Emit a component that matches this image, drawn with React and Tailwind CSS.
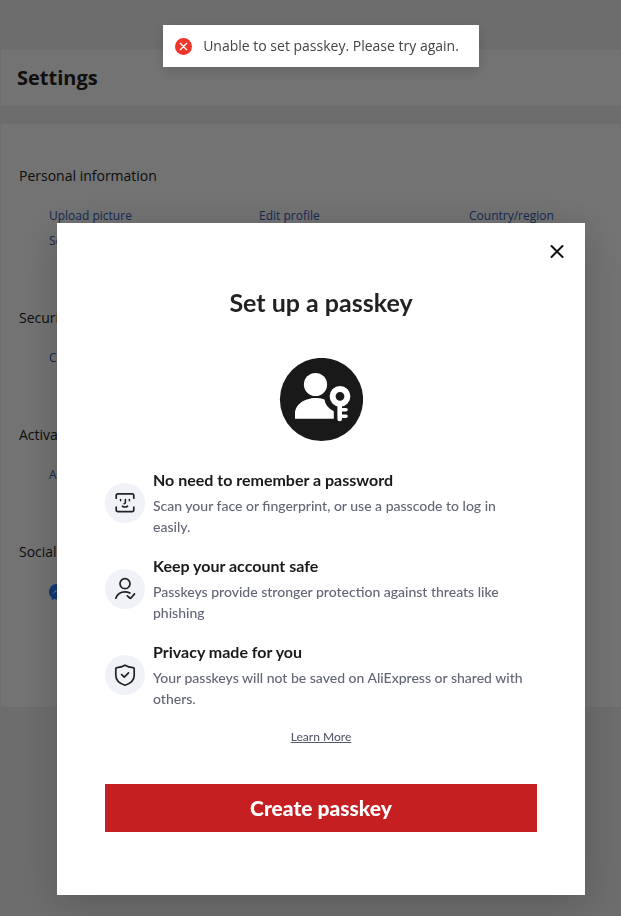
const sections = [
  {
    title: 'Personal information',
    links: ['Upload picture', 'Edit profile', 'Country/region', 'Seller information'],
    height: 'h-[142px]',
  },
  { title: 'Security information', links: ['Change password'], height: 'h-[117px]' },
  { title: 'Activation', links: ['Activate account'], height: 'h-[117px]' },
];

function FaceIcon() {
  return (
    <svg viewBox="0 0 40 40" className="size-10" fill="none" stroke="#222" strokeWidth="1.7" strokeLinecap="round" strokeLinejoin="round" aria-hidden="true">
      <path d="M11.200 15.200V12.600q0-1.800 1.800-1.800h14q1.800 0 1.800 1.800v2.600M11.200 24.200v2.600q0 1.800 1.800 1.800h14q1.800 0 1.800-1.800v-2.600" />
      <path d="M15.600 16.600v1M24.400 16.600v1M20.400 16.600v2.600q0 1.400-1.300 1.500M17.400 23.200q2.600 1.600 5.200 0" strokeWidth="1.600" />
    </svg>
  );
}

function PersonIcon() {
  return (
    <svg viewBox="0 0 40 40" className="size-10" fill="none" stroke="#222" strokeWidth="1.7" strokeLinecap="round" strokeLinejoin="round" aria-hidden="true">
      <circle cx="20" cy="14.700" r="5" />
      <path d="M10.800 29.200q2.300-6.300 9.200-6.300 2.800 0 4.900 1.100M22.300 26.800l2.500 2.200q.6.500 1.200 0l3.500-4.100" />
    </svg>
  );
}

function ShieldIcon() {
  return (
    <svg viewBox="0 0 40 40" className="size-10" fill="none" stroke="#222" strokeWidth="1.7" strokeLinecap="round" strokeLinejoin="round" aria-hidden="true">
      <path d="M20 10.200c2.600 1.500 5.200 2.200 8 2.500q1.200.1 1.200 1.300v6.300c0 5-3.400 8.200-9.200 10-5.800-1.800-9.200-5-9.200-10V14q0-1.200 1.200-1.300c2.800-.3 5.400-1 8-2.500z" />
      <path d="M16.600 19.700l2.700 2.500 4.200-4.300" />
    </svg>
  );
}

function PasskeyIcon() {
  return (
    <svg viewBox="-0.5 0.5 84 84" className="size-[84px]" aria-hidden="true">
      <circle cx="42" cy="42" r="41.600" fill="#191919" />
      <circle cx="36" cy="27" r="11.600" fill="#fff" />
      <path d="M15.500 61.200V56C15.500 47 25.500 40.600 36 40.600q5 0 9 1.300.8 7.300 9.300 11.800V61.200z" fill="#fff" />
      <circle cx="60.500" cy="38.800" r="7.400" fill="none" stroke="#fff" strokeWidth="6" />
      <path d="M60.200 47v14.500" stroke="#fff" strokeWidth="4.600" strokeLinecap="round" />
      <path d="M61 52.200h5.500M61 58.800h5.500" stroke="#fff" strokeWidth="3.600" strokeLinecap="round" />
    </svg>
  );
}

const benefits = [
  { Icon: FaceIcon, title: 'No need to remember a password', text: 'Scan your face or fingerprint, or use a passcode to log in easily.' },
  { Icon: PersonIcon, title: 'Keep your account safe', text: 'Passkeys provide stronger protection against threats like phishing' },
  { Icon: ShieldIcon, title: 'Privacy made for you', text: 'Your passkeys will not be saved on AliExpress or shared with others.' },
];

function SettingsPage() {
  return (
    <main className="min-h-screen bg-[#f2f2f2] pt-[50px] pl-px font-['Open_Sans',sans-serif]">
      <header className="bg-white px-4 py-3">
        <h1 className="text-xl leading-8 font-bold text-[#222]">Settings</h1>
      </header>
      <div className="mt-[18px] h-[583px] overflow-hidden bg-white pt-10 pl-[18px]">
        {sections.map(({ title, links, height }) => (
          <section key={title} className={height}>
            <h2 className="text-sm leading-6 text-[#222]">{title}</h2>
            <ul className="mt-[15px] grid grid-cols-[repeat(3,210px)] pl-[30px] text-xs leading-[25px]">
              {links.map((link) => (
                <li key={link}>
                  <a href="#settings" className="text-[#2e5cb8]">{link}</a>
                </li>
              ))}
            </ul>
          </section>
        ))}
        <section>
          <h2 className="text-sm leading-6 text-[#222]">Social accounts</h2>
          <a href="#social" aria-label="Messenger" className="mt-5 ml-[30px] block w-4">
            <svg viewBox="0 0 16 16" className="size-4" aria-hidden="true">
              <path d="M8 0a8 7.700 0 0 0-5.300 13.500V16l2.600-1.100A8 7.700 0 1 0 8 0z" fill="#2b80ff" />
              <path d="M3 10l3.400-3.800 2 1.700L12.500 5.500 9.300 9.200 7.200 7.500z" fill="#fff" />
            </svg>
          </a>
        </section>
      </div>
    </main>
  );
}

function PasskeyDialog() {
  return (
    <div className="fixed inset-0 flex items-start bg-black/55 pt-[223px] pr-9 pl-[57px]">
      <div
        role="dialog"
        aria-modal="true"
        aria-labelledby="passkey-title"
        className="mx-auto flex w-full max-w-[528px] flex-col bg-white px-12 pt-4 pb-[63px] font-[Lato,sans-serif] shadow-[0_8px_40px_rgba(0,0,0,0.2)]"
      >
        <button type="button" aria-label="Close" className="-mr-8 flex size-6 items-center justify-center self-end">
          <svg viewBox="0 0 24 24" className="size-6" fill="none" stroke="#111" strokeWidth="2" strokeLinecap="round" aria-hidden="true">
            <path d="M6.500 7l11 11M17.500 7l-11 11" />
          </svg>
        </button>
        <h2 id="passkey-title" className="mt-[23px] text-center text-[25px] leading-8 font-bold text-[#222]">Set up a passkey</h2>
        <div className="mt-10 flex justify-center">
          <PasskeyIcon />
        </div>
        <ul className="mt-[26px] flex flex-col gap-4">
          {benefits.map(({ Icon, title, text }) => (
            <li key={title} className="flex h-[70px] items-center gap-2">
              <span className="size-10 shrink-0 rounded-full bg-[#f0f2f7]">
                <Icon />
              </span>
              <div className="self-start pr-1">
                <h3 className="text-base leading-6 font-bold text-[#191919]">{title}</h3>
                <p className="mt-[3px] text-sm leading-[21px] font-medium text-[#626675]">{text}</p>
              </div>
            </li>
          ))}
        </ul>
        <a href="#learn-more" className="mt-[17px] self-center text-xs leading-5 font-medium text-[#555b6b] underline">Learn More</a>
        <button type="button" className="mt-[37px] h-12 bg-[#c51f21] text-[21px] font-black text-white">Create passkey</button>
      </div>
    </div>
  );
}

function Toast() {
  return (
    <div className="pointer-events-none fixed inset-x-0 top-[25px] flex justify-center pl-[21px]">
      <div
        role="alert"
        className="flex h-[42px] items-center gap-[11px] bg-white pr-5 pl-3 font-['Open_Sans',sans-serif] text-sm text-[#444] shadow-[0_4px_12px_rgba(0,0,0,0.15)]"
      >
        <svg viewBox="0 0 16 16" className="size-[17px]" aria-hidden="true">
          <circle cx="8" cy="8" r="8" fill="#f0352b" />
          <path d="M5 5l6 6M11 5l-6 6" stroke="#fff" strokeWidth="1.200" strokeLinecap="round" />
        </svg>
        <p>Unable to set passkey. Please try again.</p>
      </div>
    </div>
  );
}

export default function App() {
  return (
    <>
      <SettingsPage />
      <PasskeyDialog />
      <Toast />
    </>
  );
}
